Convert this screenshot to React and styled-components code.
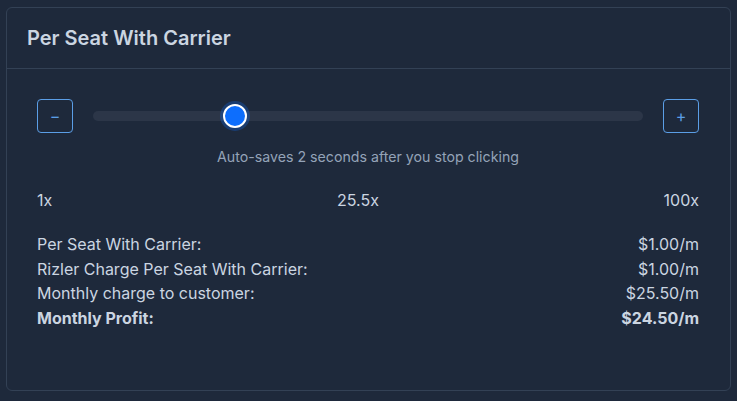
import React, { useState } from "react";
import styled, { createGlobalStyle } from "styled-components";

const Global = createGlobalStyle`
  html, body {
    margin: 0;
    padding: 0;
    background: #1e293b;
    font-family: Inter, "Noto Sans", sans-serif;
  }
  * { box-sizing: border-box; }
`;

const Page = styled.div`
  padding: 7px 6px 0 6px;
  width: 737px;
  height: 401px;
`;

const Card = styled.div`
  width: 725px;
  height: 384px;
  border: 1px solid #334155;
  border-radius: 6px;
  background: #1e293b;
  display: flex;
  flex-direction: column;
`;

const Header = styled.div`
  height: 61px;
  padding: 0 20px;
  display: flex;
  align-items: center;
  border-bottom: 1px solid #334155;

  h3 {
    margin: 0;
    font-size: 20px;
    font-weight: 600;
    color: #cbd5e1;
  }
`;

const Body = styled.div`
  padding: 30px 31px 0 30px;
  display: flex;
  flex-direction: column;
`;

const SliderRow = styled.div`
  display: flex;
  align-items: center;
  gap: 20px;
  height: 34px;
`;

const StepButton = styled.button`
  width: 36px;
  height: 34px;
  flex: 0 0 auto;
  border: 1px solid #5b9ee6;
  border-radius: 4px;
  background: transparent;
  color: #5b9ee6;
  font-family: Inter, sans-serif;
  font-size: 16px;
  line-height: 1;
  display: flex;
  align-items: center;
  justify-content: center;
  padding: 0;
  cursor: pointer;
`;

const Range = styled.input`
  -webkit-appearance: none;
  appearance: none;
  flex: 1;
  height: 24px;
  margin: 0;
  background: transparent;

  &::-webkit-slider-runnable-track {
    height: 10px;
    border-radius: 5px;
    background: #2c3648;
  }
  &::-webkit-slider-thumb {
    -webkit-appearance: none;
    width: 24px;
    height: 24px;
    margin-top: -7px;
    border-radius: 50%;
    background: #0d6efd;
    border: 2px solid #ffffff;
    box-shadow: 0 0 0 3px rgba(13, 110, 253, 0.28);
  }
`;

const Hint = styled.div`
  margin-top: 15px;
  height: 18px;
  line-height: 18px;
  text-align: center;
  font-size: 14.2px;
  color: #94a3b8;
`;

const Scale = styled.div`
  margin-top: 23px;
  height: 22px;
  line-height: 22px;
  display: flex;
  justify-content: space-between;
  font-size: 16px;
  color: #cbd5e1;
`;

const Rows = styled.div`
  margin-top: 21px;
  display: flex;
  flex-direction: column;
`;

const Row = styled.div`
  display: flex;
  justify-content: space-between;
  height: 24.6px;
  align-items: center;
  font-size: 16px;
  color: #cbd5e1;
  font-weight: ${(p) => (p.$bold ? 700 : 400)};
`;

const rows = [
  ["Per Seat With Carrier:", "$1.00/m"],
  ["Rizler Charge Per Seat With Carrier:", "$1.00/m"],
  ["Monthly charge to customer:", "$25.50/m"],
  ["Monthly Profit:", "$24.50/m", true],
];

export default function App() {
  const [value, setValue] = useState(25.5);
  return (
    <>
      <Global />
      <Page>
        <Card>
          <Header>
            <h3>Per Seat With Carrier</h3>
          </Header>
          <Body>
            <SliderRow>
              <StepButton onClick={() => setValue((v) => Math.max(1, v - 0.5))}>−</StepButton>
              <Range
                type="range"
                min={1}
                max={100}
                step={0.5}
                value={value}
                onChange={(e) => setValue(Number(e.target.value))}
              />
              <StepButton onClick={() => setValue((v) => Math.min(100, v + 0.5))}>+</StepButton>
            </SliderRow>
            <Hint>Auto-saves 2 seconds after you stop clicking</Hint>
            <Scale>
              <span>1x</span>
              <span>{value}x</span>
              <span>100x</span>
            </Scale>
            <Rows>
              {rows.map(([label, amount, bold]) => (
                <Row key={label} $bold={bold}>
                  <span>{label}</span>
                  <span>{amount}</span>
                </Row>
              ))}
            </Rows>
          </Body>
        </Card>
      </Page>
    </>
  );
}
